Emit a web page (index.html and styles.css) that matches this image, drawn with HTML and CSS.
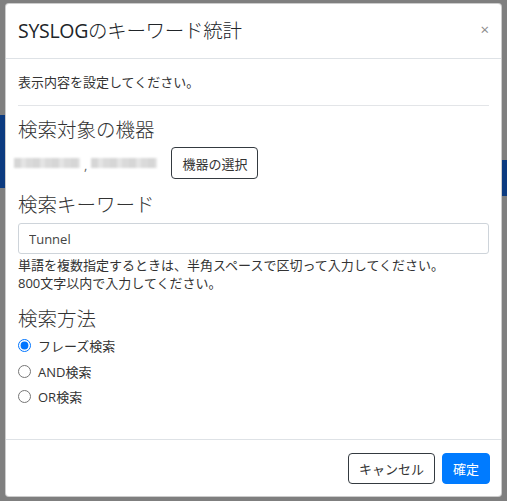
FILE: index.html
```html
<!DOCTYPE html>
<html lang="ja">
<head>
    <meta charset="UTF-8">
    <title>SYSLOGのキーワード統計</title>
    <link rel="stylesheet" href="styles.css">
</head>
<body>
<div class="modal">
    <div class="modalHeader">
        <h5 class="modalTitle">SYSLOG<span class="titleJa">のキーワード統計</span></h5>
        <span class="closeBtn">&times;</span>
    </div>

    <div class="modalBody">
        <p class="lead">表示内容を設定してください。</p>
        <hr>

        <h4 class="sectionTitle">検索対象の機器</h4>
        <div class="deviceRow">
            <span class="masked first"></span><span class="comma">,</span><span class="masked"></span>
            <button class="btnOutline btnSelect">機器の選択</button>
        </div>

        <h4 class="sectionTitle keywordTitle">検索キーワード</h4>
        <input type="text" class="textInput" value="Tunnel">
        <p class="helpText">単語を複数指定するときは、半角スペースで区切って入力してください。<br>800文字以内で入力してください。</p>

        <h4 class="sectionTitle methodTitle">検索方法</h4>
        <label class="radioRow"><input type="radio" name="method" checked> フレーズ検索</label>
        <label class="radioRow"><input type="radio" name="method"> AND検索</label>
        <label class="radioRow"><input type="radio" name="method"> OR検索</label>
    </div>

    <div class="modalFooter">
        <button class="btnOutline">キャンセル</button>
        <button class="btnPrimary">確定</button>
    </div>
</div>
</body>
</html>
```

FILE: styles.css
```css
body {
    margin: 0;
    height: 501px;
    overflow: hidden;
    background-color: #7f7f7f;
    /* page behind the backdrop peeking out at the sides */
    background-image:
        linear-gradient(#0c3b80, #0c3b80),
        linear-gradient(#0c3b80, #0c3b80);
    background-size: 5px 73px, 5px 36px;
    background-position: 0 115px, 502px 160px;
    background-repeat: no-repeat;
    font-family: "Open Sans", "Noto Sans CJK JP", sans-serif;
    color: #333;
}

.modal {
    box-sizing: border-box;
    width: 497px;
    margin: 3px 0 0 5px;
    background: #fff;
    border: 1px solid rgba(0, 0, 0, .2);
    border-radius: 4px;
}

.modalHeader {
    display: flex;
    align-items: center;
    justify-content: space-between;
    height: 54px;
    padding: 0 12px;
    border-bottom: 1px solid #dee2e6;
}

.modalTitle {
    margin: -4px 0 0;
    font-size: 19.5px;
    font-weight: normal;
    color: #212529;
    letter-spacing: -0.3px;
}

.titleJa {
    font-weight: 300;
}

.closeBtn {
    font-size: 15px;
    color: #8a8a8a;
    margin-top: -4px;
}

.modalBody {
    padding: 13px 12px 29px;
}

.lead {
    margin: 0;
    font-size: 13px;
    line-height: 20px;
}

hr {
    margin: 13px 0 10px;
    border: 0;
    border-top: 1px solid #e3e5e8;
}

.sectionTitle {
    margin: 0;
    font-size: 19.5px;
    font-weight: 300;
    line-height: 28px;
    color: #333;
}

.deviceRow {
    display: flex;
    align-items: center;
    margin-top: 3px;
}

.masked {
    display: inline-block;
    width: 66px;
    height: 10px;
    background: repeating-linear-gradient(90deg, #d6d6d6 0 7px, #e4e4e4 7px 12px, #dadada 12px 19px);
    filter: blur(1px);
}

.masked.first {
    margin-left: -4px;
}

.comma {
    font-size: 13px;
    color: #666;
    margin: 4px 4px 0 4px;
}

.btnOutline,
.btnPrimary {
    height: 31px;
    padding: 0 10px;
    font-family: inherit;
    font-size: 13px;
    border-radius: 4px;
    cursor: pointer;
}

.btnOutline {
    background: #fff;
    border: 1px solid #343a40;
    color: #333;
}

.btnPrimary {
    background: #007bff;
    border: 1px solid #007bff;
    color: #fff;
}

.btnSelect {
    height: 32px;
    margin-left: 14px;
}

.keywordTitle {
    margin-top: 12px;
}

.textInput {
    display: block;
    box-sizing: border-box;
    width: 100%;
    height: 31px;
    margin-top: 4px;
    padding: 0 10px;
    font-family: inherit;
    font-size: 13px;
    color: #444;
    border: 1px solid #ced4da;
    border-radius: 3px;
}

.helpText {
    margin: 2px 0 0;
    font-size: 13px;
    line-height: 18px;
}

.methodTitle {
    margin-top: 13px;
}

.radioRow {
    display: flex;
    align-items: center;
    height: 25.5px;
    font-size: 13px;
}

.radioRow input {
    width: 13px;
    height: 13px;
    margin: 0 7px 0 0;
    accent-color: #0075ff;
}

.modalFooter {
    display: flex;
    justify-content: flex-end;
    gap: 7px;
    padding: 13px 11px 12px;
    border-top: 1px solid #dee2e6;
}
```
